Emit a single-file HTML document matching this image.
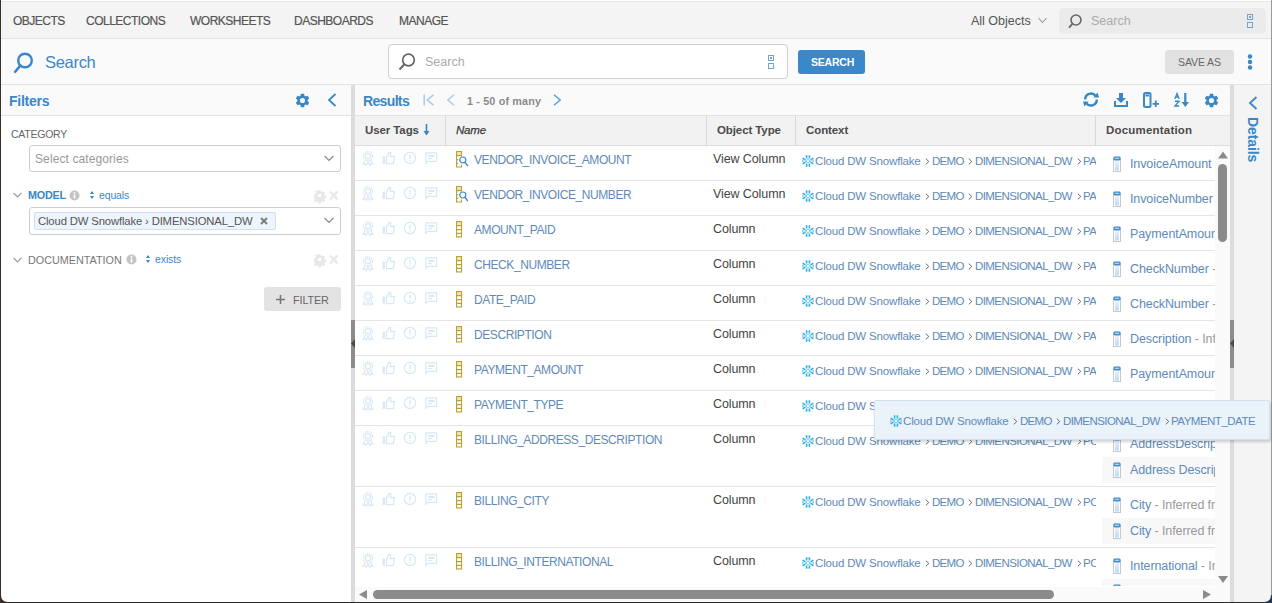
<!DOCTYPE html>
<html><head><meta charset="utf-8">
<style>
*{box-sizing:border-box}
html,body{margin:0;padding:0}
body{width:1272px;height:603px;overflow:hidden;position:relative;background:#fff;font-family:"Liberation Sans",sans-serif;color:#555}
.a{position:absolute;white-space:nowrap}
.t{position:absolute;white-space:nowrap;line-height:1}
svg{position:absolute;overflow:visible}
/* frame */
#topbar{left:0;top:0;width:1272px;height:39px;background:#f4f4f4;border-top:1px solid #fff;border-bottom:1px solid #e2e2e2}
#topline{left:0;top:1px;width:1272px;height:1px;background:#e4e4e4}
#bar2{left:0;top:39px;width:1272px;height:46px;background:#fafafa;border-bottom:1px solid #e2e2e2}
.nav{font-size:12px;letter-spacing:-0.5px;color:#555;top:14.5px;-webkit-text-stroke:0.2px #555}
#fhdr{left:0;top:85px;width:351px;height:31px;background:#fafafa;border-bottom:1px solid #e2e2e2}
#rhdr{left:355px;top:85px;width:875px;height:31px;background:#fafafa;border-bottom:1px solid #e2e2e2}
#split1{left:351px;top:85px;width:4px;height:518px;background:#dcdcdc}
#split2{left:1230px;top:85px;width:4px;height:518px;background:#dcdcdc}
.handle{position:absolute;width:4px;height:48px;top:320px;background:#8c8c8c}
#details{left:1234px;top:85px;width:38px;height:518px;background:#f4f4f4}
#thead{left:355px;top:116px;width:875px;height:30px;background:#f2f2f2;border-bottom:1px solid #dedede}
.th{font-weight:bold;font-size:11.5px;color:#4a4a4a;top:125px;letter-spacing:-0.1px}
.vline{position:absolute;width:1px;background:#d8d8d8}
.row{position:absolute;left:355px;width:863px;border-top:1px solid #e6e6e6}
.nm{font-size:12px;letter-spacing:-0.42px;color:#5e8ab7}
.ot{font-size:12.5px;color:#444;letter-spacing:-0.1px}
.ctx{font-size:11.5px;color:#5e8ab7;letter-spacing:-0.3px}
.doc{font-size:12.5px;color:#5e8ab7;letter-spacing:-0.1px}
.dim{color:#999}
</style></head>
<body>
<!-- top bar -->
<div class="a" id="topbar"></div>
<div class="a" id="topline"></div>
<div class="t nav" style="left:13px">OBJECTS</div>
<div class="t nav" style="left:86px">COLLECTIONS</div>
<div class="t nav" style="left:190px">WORKSHEETS</div>
<div class="t nav" style="left:294px">DASHBOARDS</div>
<div class="t nav" style="left:399px">MANAGE</div>

<div class="t" style="left:971px;top:15px;font-size:12.5px;color:#555;letter-spacing:0px">All Objects</div>
<svg style="left:1038px;top:17px" width="9" height="7" viewBox="0 0 9 7"><path d="M0.5 1 L4.5 5.5 L8.5 1" fill="none" stroke="#999" stroke-width="1.1"/></svg>
<div class="a" style="left:1059px;top:8px;width:207px;height:26px;background:#ebebeb;border-radius:5px"></div>
<svg style="left:1068px;top:14px" width="14" height="15" viewBox="0 0 14 15"><circle cx="8" cy="6" r="5" fill="none" stroke="#666" stroke-width="1.6"/><path d="M4.6 9.6 L1 13.6" stroke="#666" stroke-width="1.8"/></svg>
<div class="t" style="left:1091px;top:15px;font-size:12.5px;color:#aaa">Search</div>
<svg style="left:1247px;top:14px" width="7" height="14" viewBox="0 0 7 14"><rect x="0.5" y="0.5" width="5" height="5" fill="none" stroke="#6fa3d3"/><rect x="2" y="2" width="2" height="2" fill="#6fa3d3"/><rect x="0.5" y="8.5" width="5" height="5" fill="none" stroke="#6fa3d3"/></svg>

<!-- second bar -->
<div class="a" id="bar2"></div>
<svg style="left:14px;top:52px" width="20" height="22" viewBox="0 0 20 22"><circle cx="11" cy="8.5" r="6.8" fill="none" stroke="#3a87c8" stroke-width="2.4"/><path d="M6.2 13.6 L1.2 19.8" stroke="#3a87c8" stroke-width="2.6" stroke-linecap="round"/></svg>
<div class="t" style="left:45px;top:53.5px;font-size:16.5px;color:#3a87c8;letter-spacing:-0.3px">Search</div>

<div class="a" style="left:388px;top:44px;width:400px;height:35px;background:#fff;border:1px solid #cfcfcf;border-radius:4px"></div>
<svg style="left:398px;top:53px" width="18" height="18" viewBox="0 0 18 18"><circle cx="10.5" cy="7" r="5.8" fill="none" stroke="#666" stroke-width="1.7"/><path d="M6.5 11.2 L1.5 16.5" stroke="#666" stroke-width="2"/></svg>
<div class="t" style="left:425px;top:56px;font-size:12.5px;color:#aaa">Search</div>
<svg style="left:768px;top:55px" width="7" height="14" viewBox="0 0 7 14"><rect x="0.5" y="0.5" width="5" height="5" fill="none" stroke="#6fa3d3"/><rect x="2" y="2" width="2" height="2" fill="#6fa3d3"/><rect x="0.5" y="8.5" width="5" height="5" fill="none" stroke="#6fa3d3"/></svg>

<div class="a" style="left:798px;top:50px;width:67px;height:24px;background:#3a88c9;border-radius:3px"></div>
<div class="t" style="left:811px;top:57px;font-size:10.5px;font-weight:bold;color:#fff;letter-spacing:-0.2px">SEARCH</div>

<div class="a" style="left:1165px;top:50px;width:69px;height:24px;background:#e2e2e2;border-radius:3px"></div>
<div class="t" style="left:1178px;top:57px;font-size:10.5px;color:#666;letter-spacing:-0.1px">SAVE AS</div>
<svg style="left:1247px;top:54px" width="6" height="16" viewBox="0 0 6 16"><circle cx="3" cy="2.5" r="2.2" fill="#3a87c8"/><circle cx="3" cy="8" r="2.2" fill="#3a87c8"/><circle cx="3" cy="13.5" r="2.2" fill="#3a87c8"/></svg>

<!-- panels -->
<div class="a" id="fhdr"></div>
<div class="a" id="rhdr"></div>
<div class="a" id="split1"><div class="handle" style="top:235px"></div></div>
<div class="a" id="split2"><div class="handle" style="top:235px"></div></div>
<svg style="left:351px;top:339px" width="4" height="9" viewBox="0 0 4 9"><path d="M4 0 L4 9 L0 4.5Z" fill="#4a4a4a"/></svg>
<svg style="left:1230px;top:339px" width="4" height="9" viewBox="0 0 4 9"><path d="M4 0 L4 9 L0 4.5Z" fill="#4a4a4a"/></svg>
<div class="a" id="details"></div>
<div class="a" style="left:1271px;top:0;width:1px;height:603px;background:#9a9a9a"></div>
<div class="a" style="left:0;top:0;width:1px;height:603px;background:#3a2e28"></div>
<div class="a" style="left:0;top:602px;width:1272px;height:1px;background:#2d2a2a"></div>
<svg style="left:0;top:595px" width="8" height="8" viewBox="0 0 8 8"><path d="M0 0 L1 0 Q1 7 8 7 L8 8 L0 8Z" fill="#3a2e28"/></svg>
<svg style="left:1264px;top:595px" width="8" height="8" viewBox="0 0 8 8"><path d="M8 0 L7 0 Q7 7 0 7 L0 8 L8 8Z" fill="#1f3550"/></svg>


<!-- filters panel -->
<div class="t" style="left:9px;top:94px;font-size:14px;font-weight:bold;color:#3a87c8;letter-spacing:-0.25px">Filters</div>
<svg style="left:293.5px;top:91.5px" width="17" height="17" viewBox="0 0 24 24"><path fill="#3a87c8" d="M19.14 12.94c.04-.3.06-.61.06-.94 0-.32-.02-.64-.07-.94l2.03-1.58a.49.49 0 0 0 .12-.61l-1.92-3.32a.49.49 0 0 0-.59-.22l-2.39.96c-.5-.38-1.03-.7-1.62-.94l-.36-2.54a.48.48 0 0 0-.48-.41h-3.84c-.24 0-.43.17-.47.41l-.36 2.54c-.59.24-1.13.57-1.62.94l-2.39-.96a.48.48 0 0 0-.59.22L2.74 8.87c-.12.21-.08.47.12.61l2.03 1.58c-.05.3-.09.63-.09.94s.02.64.07.94l-2.03 1.58a.49.49 0 0 0-.12.61l1.92 3.32c.12.22.37.29.59.22l2.39-.96c.5.38 1.03.7 1.62.94l.36 2.54c.05.24.24.41.48.41h3.84c.24 0 .44-.17.47-.41l.36-2.54c.59-.24 1.13-.56 1.62-.94l2.39.96c.22.08.47 0 .59-.22l1.92-3.32c.12-.22.07-.47-.12-.61l-2.01-1.58zM12 15.6A3.6 3.6 0 1 1 12 8.4a3.6 3.6 0 0 1 0 7.2z"/></svg>
<svg style="left:327px;top:93px" width="10" height="14" viewBox="0 0 10 14"><path d="M8.5 1 L2 7 L8.5 13" fill="none" stroke="#3a87c8" stroke-width="1.8"/></svg>

<div class="t" style="left:11px;top:128.5px;font-size:10.5px;color:#666;letter-spacing:-0.25px">CATEGORY</div>
<div class="a" style="left:29px;top:145px;width:312px;height:27px;background:#fff;border:1px solid #cdcdcd;border-radius:3px"></div>
<div class="t" style="left:35px;top:153px;font-size:12px;color:#999;letter-spacing:0.1px">Select categories</div>
<svg style="left:324px;top:155px" width="10" height="7" viewBox="0 0 10 7"><path d="M0.6 1 L5 5.5 L9.4 1" fill="none" stroke="#888" stroke-width="1.2"/></svg>

<svg style="left:13px;top:192px" width="9" height="6" viewBox="0 0 9 6"><path d="M0.5 0.8 L4.5 4.8 L8.5 0.8" fill="none" stroke="#999" stroke-width="1.2"/></svg>
<div class="t" style="left:28px;top:190px;font-size:10.8px;font-weight:bold;color:#3a87c8;letter-spacing:-0.2px">MODEL</div>
<svg style="left:69px;top:190px" width="11" height="11" viewBox="0 0 11 11"><circle cx="5.5" cy="5.5" r="5" fill="#c4c4c4"/><rect x="4.7" y="4.5" width="1.6" height="4" fill="#fff"/><circle cx="5.5" cy="2.9" r="0.9" fill="#fff"/></svg>
<svg style="left:90px;top:191px" width="4" height="8" viewBox="0 0 4 8"><path d="M0 3 L2 0 L4 3Z M0 5 L2 8 L4 5Z" fill="#3a87c8"/></svg>
<div class="t" style="left:99px;top:189.5px;font-size:10.5px;color:#3a87c8;letter-spacing:-0.15px">equals</div>
<svg style="left:314px;top:190px" width="25" height="11" viewBox="0 0 25 11"><g fill="#e8e8e8"><circle cx="5.5" cy="5.5" r="4.2"/><path d="M4.5 0h2l.4 1.5 1.4.6 1.3-.8 1.4 1.4-.8 1.3.6 1.4 1.5.4v2l-1.5.4-.6 1.4.8 1.3-1.4 1.4-1.3-.8-1.4.6-.4 1.5h-2l-.4-1.5-1.4-.6-1.3.8-1.4-1.4.8-1.3-.6-1.4L0 6.5v-2l1.5-.4.6-1.4-.8-1.3 1.4-1.4 1.3.8 1.4-.6z"/></g><circle cx="5.5" cy="5.5" r="1.7" fill="#fff"/><path d="M16 1.5 L23.5 9.5 M23.5 1.5 L16 9.5" stroke="#e8e8e8" stroke-width="2"/></svg>

<div class="a" style="left:29px;top:207px;width:312px;height:28px;background:#fff;border:1px solid #cdcdcd;border-radius:3px"></div>
<div class="a" style="left:34px;top:212px;width:242px;height:18px;background:#edf4fb;border:1px solid #cfe0f0;border-radius:2px"></div>
<div class="t" style="left:38px;top:216px;font-size:11.3px;color:#555;letter-spacing:-0.15px">Cloud DW Snowflake › DIMENSIONAL_DW</div>
<svg style="left:260px;top:217px" width="8" height="8" viewBox="0 0 8 8"><path d="M1 1 L7 7 M7 1 L1 7" stroke="#777" stroke-width="1.8"/></svg>
<svg style="left:324px;top:217px" width="10" height="7" viewBox="0 0 10 7"><path d="M0.6 1 L5 5.5 L9.4 1" fill="none" stroke="#888" stroke-width="1.2"/></svg>

<svg style="left:13px;top:257px" width="9" height="6" viewBox="0 0 9 6"><path d="M0.5 0.8 L4.5 4.8 L8.5 0.8" fill="none" stroke="#999" stroke-width="1.2"/></svg>
<div class="t" style="left:28px;top:255px;font-size:10.8px;color:#777;letter-spacing:0px">DOCUMENTATION</div>
<svg style="left:126px;top:254px" width="11" height="11" viewBox="0 0 11 11"><circle cx="5.5" cy="5.5" r="5" fill="#c4c4c4"/><rect x="4.7" y="4.5" width="1.6" height="4" fill="#fff"/><circle cx="5.5" cy="2.9" r="0.9" fill="#fff"/></svg>
<svg style="left:146px;top:255px" width="4" height="8" viewBox="0 0 4 8"><path d="M0 3 L2 0 L4 3Z M0 5 L2 8 L4 5Z" fill="#3a87c8"/></svg>
<div class="t" style="left:155px;top:254px;font-size:10.5px;color:#3a87c8;letter-spacing:-0.1px">exists</div>
<svg style="left:314px;top:254px" width="25" height="11" viewBox="0 0 25 11"><g fill="#e8e8e8"><path d="M4.5 0h2l.4 1.5 1.4.6 1.3-.8 1.4 1.4-.8 1.3.6 1.4 1.5.4v2l-1.5.4-.6 1.4.8 1.3-1.4 1.4-1.3-.8-1.4.6-.4 1.5h-2l-.4-1.5-1.4-.6-1.3.8-1.4-1.4.8-1.3-.6-1.4L0 6.5v-2l1.5-.4.6-1.4-.8-1.3 1.4-1.4 1.3.8 1.4-.6z"/></g><circle cx="5.5" cy="5.5" r="1.7" fill="#fff"/><path d="M16 1.5 L23.5 9.5 M23.5 1.5 L16 9.5" stroke="#e8e8e8" stroke-width="2"/></svg>

<div class="a" style="left:264px;top:287px;width:77px;height:24px;background:#e3e3e3;border-radius:3px"></div>
<svg style="left:276px;top:295px" width="9" height="9" viewBox="0 0 9 9"><path d="M4.5 0 V9 M0 4.5 H9" stroke="#777" stroke-width="1.6"/></svg>
<div class="t" style="left:293px;top:294.5px;font-size:10.8px;color:#666;letter-spacing:-0.1px">FILTER</div>


<!-- results header -->
<div class="t" style="left:363px;top:93.5px;font-size:14px;font-weight:bold;color:#3a87c8;letter-spacing:-0.65px">Results</div>
<svg style="left:423px;top:94px" width="12" height="12" viewBox="0 0 12 12"><path d="M1.2 0.5 V11.5 M10.5 0.8 L4.2 6 L10.5 11.2" fill="none" stroke="#a8cbe8" stroke-width="1.5"/></svg>
<svg style="left:446px;top:94px" width="9" height="12" viewBox="0 0 9 12"><path d="M8 0.8 L1.8 6 L8 11.2" fill="none" stroke="#a8cbe8" stroke-width="1.5"/></svg>
<div class="t" style="left:467px;top:96px;font-size:10.8px;font-weight:bold;color:#8a8a8a;letter-spacing:0.15px">1 - 50 of many</div>
<svg style="left:553px;top:94px" width="9" height="12" viewBox="0 0 9 12"><path d="M1 0.8 L7.2 6 L1 11.2" fill="none" stroke="#5b9fd6" stroke-width="1.5"/></svg>

<svg style="left:1082px;top:92px" width="18" height="15" viewBox="0 0 18 15"><path d="M3.2 7.5 A5.8 5.8 0 0 1 13.6 3.8" fill="none" stroke="#3a87c8" stroke-width="2.4"/><path d="M14.8 7.5 A5.8 5.8 0 0 1 4.4 11.2" fill="none" stroke="#3a87c8" stroke-width="2.4"/><path d="M11.4 5.4 L17 5.6 L15.6 0.6Z" fill="#3a87c8"/><path d="M6.6 9.6 L1 9.4 L2.4 14.4Z" fill="#3a87c8"/></svg>
<svg style="left:1114px;top:93px" width="14" height="14" viewBox="0 0 14 14"><path d="M5 0 H9 V5 H12 L7 10 L2 5 H5Z" fill="#3a87c8"/><path d="M1 8 V13 H13 V8" fill="none" stroke="#3a87c8" stroke-width="2"/></svg>
<svg style="left:1143px;top:92px" width="17" height="16" viewBox="0 0 17 16"><rect x="1" y="1" width="6.5" height="14" rx="1.5" fill="none" stroke="#3a87c8" stroke-width="2"/><rect x="2.5" y="2.5" width="3.5" height="2" fill="#3a87c8"/><path d="M12.8 8.5 V15 M9.6 11.8 H16" stroke="#3a87c8" stroke-width="1.8"/></svg>
<svg style="left:1174px;top:93px" width="16" height="14" viewBox="0 0 16 14"><path d="M0.8 6 L3 0.5 L5.2 6 M1.6 4 H4.4" fill="none" stroke="#3a87c8" stroke-width="1.3"/><path d="M1 8.3 H5 L1 13 H5.2" fill="none" stroke="#3a87c8" stroke-width="1.4"/><path d="M10.2 0 H12.4 V9 H15 L11.3 14 L7.6 9 H10.2Z" fill="#3a87c8"/></svg>
<svg style="left:1202.5px;top:91.5px" width="17" height="17" viewBox="0 0 24 24"><path fill="#3a87c8" d="M19.14 12.94c.04-.3.06-.61.06-.94 0-.32-.02-.64-.07-.94l2.03-1.58a.49.49 0 0 0 .12-.61l-1.92-3.32a.49.49 0 0 0-.59-.22l-2.39.96c-.5-.38-1.030-.7-1.62-.94l-.36-2.54a.48.48 0 0 0-.48-.41h-3.84c-.24 0-.43.17-.47.41l-.36 2.54c-.59.24-1.13.57-1.62.94l-2.39-.96a.48.48 0 0 0-.59.22L2.74 8.87c-.12.21-.08.47.12.61l2.03 1.58c-.05.3-.09.63-.09.94s.02.64.07.94l-2.03 1.58a.49.49 0 0 0-.12.61l1.920 3.32c.12.22.37.29.59.22l2.39-.96c.5.38 1.03.7 1.62.94l.36 2.54c.05.24.24.41.48.41h3.84c.24 0 .44-.17.47-.41l.36-2.54c.59-.24 1.13-.56 1.62-.94l2.39.96c.22.08.47 0 .59-.22l1.92-3.32c.12-.22.07-.47-.12-.61l-2.01-1.58zM12 15.6A3.6 3.6 0 1 1 12 8.4a3.6 3.6 0 0 1 0 7.2z"/></svg>

<svg style="left:1248px;top:96px" width="10" height="14" viewBox="0 0 10 14"><path d="M8.5 1 L2 7 L8.5 13" fill="none" stroke="#3a87c8" stroke-width="1.8"/></svg>
<div class="t" style="left:1259.5px;top:117px;font-size:14px;font-weight:bold;color:#3a87c8;transform-origin:0 0;transform:rotate(90deg);letter-spacing:-0.1px">Details</div>

<!-- rows -->
<div class="a" style="left:355px;top:145px;width:860px;height:441px;overflow:hidden"><div class="a" style="left:-355px;top:-145px;width:1272px;height:603px">
<div class="a" style="left:355px;top:145px;width:863px;height:1px;background:#e5e5e5"></div>
<svg style="left:361px;top:151px" width="78" height="15" viewBox="0 0 78 15">
<g fill="none" stroke="#d9e8f5" stroke-width="1.2"><circle cx="7" cy="5.3" r="4.6" stroke-dasharray="1.6 0.6"/><circle cx="7" cy="5.3" r="2.6"/><path d="M4.3 9.2 L2.2 13 L4.4 12.8 L5.3 14.2 L7 10.6 M9.7 9.2 L11.8 13 L9.6 12.8 L8.7 14.2 L7 10.6"/></g>
<g fill="#d9e8f5"><rect x="21.6" y="5.5" width="2.3" height="7.3"/></g><path d="M25.4 12.6 V6.3 L28.4 1.2 L29.8 1.8 L29.3 5.5 H33.6 L32.3 12.6Z" fill="none" stroke="#d9e8f5" stroke-width="1.3" stroke-linejoin="round"/>
<circle cx="49" cy="7" r="5.6" fill="none" stroke="#d9e8f5" stroke-width="1.2"/><rect x="48.3" y="3.5" width="1.4" height="4.4" fill="#d9e8f5"/><rect x="48.3" y="9.2" width="1.4" height="1.4" fill="#d9e8f5"/>
<path d="M64.8 1.8 H75.6 V10.3 H66.8 L64.8 12.5 Z" fill="none" stroke="#d9e8f5" stroke-width="1.2" stroke-linejoin="round"/><rect x="67.3" y="3.8" width="6" height="2.2" fill="#d9e8f5"/><rect x="66.8" y="7" width="4.2" height="1.2" fill="#d9e8f5"/>
</svg>
<svg style="left:456px;top:150.5px" width="14" height="17" viewBox="0 0 14 17"><rect x="1" y="1" width="4" height="3.2" fill="#f2e4b0"/><path d="M5.5 5.5 V0.55 H0.55 V15.95 H5.5 V13.5 M0.5 4.6 H5.5 M0.5 8.6 H2.2 M0.5 12.4 H2.2" fill="none" stroke="#bc9f36" stroke-width="1.1"/><circle cx="6.8" cy="9" r="3" fill="none" stroke="#3a87c8" stroke-width="1.2"/><path d="M8.9 11.2 L11.8 15" stroke="#3a87c8" stroke-width="1.3"/></svg>
<div class="t nm" style="left:474px;top:153.5px">VENDOR_INVOICE_AMOUNT</div>
<div class="t ot" style="left:713px;top:152.5px">View Column</div>
<svg style="left:801.5px;top:155px" width="12" height="12" viewBox="0 0 12 12"><g stroke="#2fb0e6" stroke-width="1.6" fill="none" stroke-linecap="butt"><path d="M4.6 0.3 V3.6 M7.4 0.3 V3.6 M4.6 11.7 V8.4 M7.4 11.7 V8.4"/><path d="M0.6 3.2 L3.4 4.9 M0.6 8.8 L3.4 7.1 M11.4 3.2 L8.6 4.9 M11.4 8.8 L8.6 7.1"/></g><g fill="#2fb0e6"><path d="M3 6 L4.6 4.6 L4.6 7.4Z M9 6 L7.4 4.6 L7.4 7.4Z M6 3.7 L7 5 L5 5Z M6 8.3 L7 7 L5 7Z"/><path d="M0 5.2 L2.4 6 L0 6.8Z M12 5.2 L9.6 6 L12 6.8Z"/></g></svg>
<div class="t ctx" style="left:815px;top:155.5px;letter-spacing:-0.17px">Cloud DW Snowflake</div>
<svg style="left:925.0px;top:157.5px" width="5" height="7" viewBox="0 0 5 7"><path d="M0.8 0.6 L3.8 3.5 L0.8 6.4" fill="none" stroke="#666" stroke-width="1"/></svg>
<div class="t ctx" style="left:932px;top:155.5px;letter-spacing:-0.7px">DEMO</div>
<svg style="left:968.0px;top:157.5px" width="5" height="7" viewBox="0 0 5 7"><path d="M0.8 0.6 L3.8 3.5 L0.8 6.4" fill="none" stroke="#666" stroke-width="1"/></svg>
<div class="t ctx" style="left:975px;top:155.5px;letter-spacing:-0.57px">DIMENSIONAL_DW</div>
<svg style="left:1076.5px;top:157.5px" width="5" height="7" viewBox="0 0 5 7"><path d="M0.8 0.6 L3.8 3.5 L0.8 6.4" fill="none" stroke="#666" stroke-width="1"/></svg>
<div class="t ctx" style="left:1083px;top:155.5px;width:13px;overflow:hidden;letter-spacing:-0.5px">PAYMENT_DATE</div>
<svg style="left:1113px;top:156px" width="8" height="16" viewBox="0 0 8 16"><defs><linearGradient id="dg" x1="0" y1="0" x2="0" y2="1"><stop offset="0" stop-color="#e8f2fb"/><stop offset="1" stop-color="#b9daf3"/></linearGradient></defs><rect x="0.5" y="3" width="7" height="12.5" fill="#fff" stroke="#c8c8c8" stroke-width="1"/><rect x="2" y="5" width="4" height="9.5" fill="url(#dg)"/><rect x="0.4" y="0.4" width="7.2" height="4" rx="1.4" fill="#3a87c8"/><rect x="1.7" y="1.6" width="4.6" height="1.5" fill="#a9cdee"/></svg>
<div class="t doc" style="left:1130px;top:158px;width:85px;overflow:hidden">InvoiceAmount<span class="dim"></span></div>
<div class="a" style="left:355px;top:180px;width:863px;height:1px;background:#e5e5e5"></div>
<svg style="left:361px;top:186px" width="78" height="15" viewBox="0 0 78 15">
<g fill="none" stroke="#d9e8f5" stroke-width="1.2"><circle cx="7" cy="5.3" r="4.6" stroke-dasharray="1.6 0.6"/><circle cx="7" cy="5.3" r="2.6"/><path d="M4.3 9.2 L2.2 13 L4.4 12.8 L5.3 14.2 L7 10.6 M9.7 9.2 L11.8 13 L9.6 12.8 L8.7 14.2 L7 10.6"/></g>
<g fill="#d9e8f5"><rect x="21.6" y="5.5" width="2.3" height="7.3"/></g><path d="M25.4 12.6 V6.3 L28.4 1.2 L29.8 1.8 L29.3 5.5 H33.6 L32.3 12.6Z" fill="none" stroke="#d9e8f5" stroke-width="1.3" stroke-linejoin="round"/>
<circle cx="49" cy="7" r="5.6" fill="none" stroke="#d9e8f5" stroke-width="1.2"/><rect x="48.3" y="3.5" width="1.4" height="4.4" fill="#d9e8f5"/><rect x="48.3" y="9.2" width="1.4" height="1.4" fill="#d9e8f5"/>
<path d="M64.8 1.8 H75.6 V10.3 H66.8 L64.8 12.5 Z" fill="none" stroke="#d9e8f5" stroke-width="1.2" stroke-linejoin="round"/><rect x="67.3" y="3.8" width="6" height="2.2" fill="#d9e8f5"/><rect x="66.8" y="7" width="4.2" height="1.2" fill="#d9e8f5"/>
</svg>
<svg style="left:456px;top:185.5px" width="14" height="17" viewBox="0 0 14 17"><rect x="1" y="1" width="4" height="3.2" fill="#f2e4b0"/><path d="M5.5 5.5 V0.55 H0.55 V15.95 H5.5 V13.5 M0.5 4.6 H5.5 M0.5 8.6 H2.2 M0.5 12.4 H2.2" fill="none" stroke="#bc9f36" stroke-width="1.1"/><circle cx="6.8" cy="9" r="3" fill="none" stroke="#3a87c8" stroke-width="1.2"/><path d="M8.9 11.2 L11.8 15" stroke="#3a87c8" stroke-width="1.3"/></svg>
<div class="t nm" style="left:474px;top:188.5px">VENDOR_INVOICE_NUMBER</div>
<div class="t ot" style="left:713px;top:187.5px">View Column</div>
<svg style="left:801.5px;top:190px" width="12" height="12" viewBox="0 0 12 12"><g stroke="#2fb0e6" stroke-width="1.6" fill="none" stroke-linecap="butt"><path d="M4.6 0.3 V3.6 M7.4 0.3 V3.6 M4.6 11.7 V8.4 M7.4 11.7 V8.4"/><path d="M0.6 3.2 L3.4 4.9 M0.6 8.8 L3.4 7.1 M11.4 3.2 L8.6 4.9 M11.4 8.8 L8.6 7.1"/></g><g fill="#2fb0e6"><path d="M3 6 L4.6 4.6 L4.6 7.4Z M9 6 L7.4 4.6 L7.4 7.4Z M6 3.7 L7 5 L5 5Z M6 8.3 L7 7 L5 7Z"/><path d="M0 5.2 L2.4 6 L0 6.8Z M12 5.2 L9.6 6 L12 6.8Z"/></g></svg>
<div class="t ctx" style="left:815px;top:190.5px;letter-spacing:-0.17px">Cloud DW Snowflake</div>
<svg style="left:925.0px;top:192.5px" width="5" height="7" viewBox="0 0 5 7"><path d="M0.8 0.6 L3.8 3.5 L0.8 6.4" fill="none" stroke="#666" stroke-width="1"/></svg>
<div class="t ctx" style="left:932px;top:190.5px;letter-spacing:-0.7px">DEMO</div>
<svg style="left:968.0px;top:192.5px" width="5" height="7" viewBox="0 0 5 7"><path d="M0.8 0.6 L3.8 3.5 L0.8 6.4" fill="none" stroke="#666" stroke-width="1"/></svg>
<div class="t ctx" style="left:975px;top:190.5px;letter-spacing:-0.57px">DIMENSIONAL_DW</div>
<svg style="left:1076.5px;top:192.5px" width="5" height="7" viewBox="0 0 5 7"><path d="M0.8 0.6 L3.8 3.5 L0.8 6.4" fill="none" stroke="#666" stroke-width="1"/></svg>
<div class="t ctx" style="left:1083px;top:190.5px;width:13px;overflow:hidden;letter-spacing:-0.5px">PAYMENT_DATE</div>
<svg style="left:1113px;top:191px" width="8" height="16" viewBox="0 0 8 16"><defs><linearGradient id="dg" x1="0" y1="0" x2="0" y2="1"><stop offset="0" stop-color="#e8f2fb"/><stop offset="1" stop-color="#b9daf3"/></linearGradient></defs><rect x="0.5" y="3" width="7" height="12.5" fill="#fff" stroke="#c8c8c8" stroke-width="1"/><rect x="2" y="5" width="4" height="9.5" fill="url(#dg)"/><rect x="0.4" y="0.4" width="7.2" height="4" rx="1.4" fill="#3a87c8"/><rect x="1.7" y="1.6" width="4.6" height="1.5" fill="#a9cdee"/></svg>
<div class="t doc" style="left:1130px;top:193px;width:85px;overflow:hidden">InvoiceNumber<span class="dim"></span></div>
<div class="a" style="left:355px;top:215px;width:863px;height:1px;background:#e5e5e5"></div>
<svg style="left:361px;top:221px" width="78" height="15" viewBox="0 0 78 15">
<g fill="none" stroke="#d9e8f5" stroke-width="1.2"><circle cx="7" cy="5.3" r="4.6" stroke-dasharray="1.6 0.6"/><circle cx="7" cy="5.3" r="2.6"/><path d="M4.3 9.2 L2.2 13 L4.4 12.8 L5.3 14.2 L7 10.6 M9.7 9.2 L11.8 13 L9.6 12.8 L8.7 14.2 L7 10.6"/></g>
<g fill="#d9e8f5"><rect x="21.6" y="5.5" width="2.3" height="7.3"/></g><path d="M25.4 12.6 V6.3 L28.4 1.2 L29.8 1.8 L29.3 5.5 H33.6 L32.3 12.6Z" fill="none" stroke="#d9e8f5" stroke-width="1.3" stroke-linejoin="round"/>
<circle cx="49" cy="7" r="5.6" fill="none" stroke="#d9e8f5" stroke-width="1.2"/><rect x="48.3" y="3.5" width="1.4" height="4.4" fill="#d9e8f5"/><rect x="48.3" y="9.2" width="1.4" height="1.4" fill="#d9e8f5"/>
<path d="M64.8 1.8 H75.6 V10.3 H66.8 L64.8 12.5 Z" fill="none" stroke="#d9e8f5" stroke-width="1.2" stroke-linejoin="round"/><rect x="67.3" y="3.8" width="6" height="2.2" fill="#d9e8f5"/><rect x="66.8" y="7" width="4.2" height="1.2" fill="#d9e8f5"/>
</svg>
<svg style="left:456px;top:220.5px" width="7" height="17" viewBox="0 0 7 17"><rect x="1" y="1" width="4" height="3.2" fill="#f2e4b0"/><rect x="0.55" y="0.55" width="5" height="15.4" fill="none" stroke="#bc9f36" stroke-width="1.1"/><path d="M0.5 4.6 H5.5 M0.5 8.6 H5.5 M0.5 12.4 H5.5" stroke="#bc9f36" stroke-width="1.1"/></svg>
<div class="t nm" style="left:474px;top:223.5px">AMOUNT_PAID</div>
<div class="t ot" style="left:713px;top:222.5px">Column</div>
<svg style="left:801.5px;top:225px" width="12" height="12" viewBox="0 0 12 12"><g stroke="#2fb0e6" stroke-width="1.6" fill="none" stroke-linecap="butt"><path d="M4.6 0.3 V3.6 M7.4 0.3 V3.6 M4.6 11.7 V8.4 M7.4 11.7 V8.4"/><path d="M0.6 3.2 L3.4 4.9 M0.6 8.8 L3.4 7.1 M11.4 3.2 L8.6 4.9 M11.4 8.8 L8.6 7.1"/></g><g fill="#2fb0e6"><path d="M3 6 L4.6 4.6 L4.6 7.4Z M9 6 L7.4 4.6 L7.4 7.4Z M6 3.7 L7 5 L5 5Z M6 8.3 L7 7 L5 7Z"/><path d="M0 5.2 L2.4 6 L0 6.8Z M12 5.2 L9.6 6 L12 6.8Z"/></g></svg>
<div class="t ctx" style="left:815px;top:225.5px;letter-spacing:-0.17px">Cloud DW Snowflake</div>
<svg style="left:925.0px;top:227.5px" width="5" height="7" viewBox="0 0 5 7"><path d="M0.8 0.6 L3.8 3.5 L0.8 6.4" fill="none" stroke="#666" stroke-width="1"/></svg>
<div class="t ctx" style="left:932px;top:225.5px;letter-spacing:-0.7px">DEMO</div>
<svg style="left:968.0px;top:227.5px" width="5" height="7" viewBox="0 0 5 7"><path d="M0.8 0.6 L3.8 3.5 L0.8 6.4" fill="none" stroke="#666" stroke-width="1"/></svg>
<div class="t ctx" style="left:975px;top:225.5px;letter-spacing:-0.57px">DIMENSIONAL_DW</div>
<svg style="left:1076.5px;top:227.5px" width="5" height="7" viewBox="0 0 5 7"><path d="M0.8 0.6 L3.8 3.5 L0.8 6.4" fill="none" stroke="#666" stroke-width="1"/></svg>
<div class="t ctx" style="left:1083px;top:225.5px;width:13px;overflow:hidden;letter-spacing:-0.5px">PAYMENT_DATE</div>
<svg style="left:1113px;top:226px" width="8" height="16" viewBox="0 0 8 16"><defs><linearGradient id="dg" x1="0" y1="0" x2="0" y2="1"><stop offset="0" stop-color="#e8f2fb"/><stop offset="1" stop-color="#b9daf3"/></linearGradient></defs><rect x="0.5" y="3" width="7" height="12.5" fill="#fff" stroke="#c8c8c8" stroke-width="1"/><rect x="2" y="5" width="4" height="9.5" fill="url(#dg)"/><rect x="0.4" y="0.4" width="7.2" height="4" rx="1.4" fill="#3a87c8"/><rect x="1.7" y="1.6" width="4.6" height="1.5" fill="#a9cdee"/></svg>
<div class="t doc" style="left:1130px;top:228px;width:85px;overflow:hidden">PaymentAmount<span class="dim"></span></div>
<div class="a" style="left:355px;top:250px;width:863px;height:1px;background:#e5e5e5"></div>
<svg style="left:361px;top:256px" width="78" height="15" viewBox="0 0 78 15">
<g fill="none" stroke="#d9e8f5" stroke-width="1.2"><circle cx="7" cy="5.3" r="4.6" stroke-dasharray="1.6 0.6"/><circle cx="7" cy="5.3" r="2.6"/><path d="M4.3 9.2 L2.2 13 L4.4 12.8 L5.3 14.2 L7 10.6 M9.7 9.2 L11.8 13 L9.6 12.8 L8.7 14.2 L7 10.6"/></g>
<g fill="#d9e8f5"><rect x="21.6" y="5.5" width="2.3" height="7.3"/></g><path d="M25.4 12.6 V6.3 L28.4 1.2 L29.8 1.8 L29.3 5.5 H33.6 L32.3 12.6Z" fill="none" stroke="#d9e8f5" stroke-width="1.3" stroke-linejoin="round"/>
<circle cx="49" cy="7" r="5.6" fill="none" stroke="#d9e8f5" stroke-width="1.2"/><rect x="48.3" y="3.5" width="1.4" height="4.4" fill="#d9e8f5"/><rect x="48.3" y="9.2" width="1.4" height="1.4" fill="#d9e8f5"/>
<path d="M64.8 1.8 H75.6 V10.3 H66.8 L64.8 12.5 Z" fill="none" stroke="#d9e8f5" stroke-width="1.2" stroke-linejoin="round"/><rect x="67.3" y="3.8" width="6" height="2.2" fill="#d9e8f5"/><rect x="66.8" y="7" width="4.2" height="1.2" fill="#d9e8f5"/>
</svg>
<svg style="left:456px;top:255.5px" width="7" height="17" viewBox="0 0 7 17"><rect x="1" y="1" width="4" height="3.2" fill="#f2e4b0"/><rect x="0.55" y="0.55" width="5" height="15.4" fill="none" stroke="#bc9f36" stroke-width="1.1"/><path d="M0.5 4.6 H5.5 M0.5 8.6 H5.5 M0.5 12.4 H5.5" stroke="#bc9f36" stroke-width="1.1"/></svg>
<div class="t nm" style="left:474px;top:258.5px">CHECK_NUMBER</div>
<div class="t ot" style="left:713px;top:257.5px">Column</div>
<svg style="left:801.5px;top:260px" width="12" height="12" viewBox="0 0 12 12"><g stroke="#2fb0e6" stroke-width="1.6" fill="none" stroke-linecap="butt"><path d="M4.6 0.3 V3.6 M7.4 0.3 V3.6 M4.6 11.7 V8.4 M7.4 11.7 V8.4"/><path d="M0.6 3.2 L3.4 4.9 M0.6 8.8 L3.4 7.1 M11.4 3.2 L8.6 4.9 M11.4 8.8 L8.6 7.1"/></g><g fill="#2fb0e6"><path d="M3 6 L4.6 4.6 L4.6 7.4Z M9 6 L7.4 4.6 L7.4 7.4Z M6 3.7 L7 5 L5 5Z M6 8.3 L7 7 L5 7Z"/><path d="M0 5.2 L2.4 6 L0 6.8Z M12 5.2 L9.6 6 L12 6.8Z"/></g></svg>
<div class="t ctx" style="left:815px;top:260.5px;letter-spacing:-0.17px">Cloud DW Snowflake</div>
<svg style="left:925.0px;top:262.5px" width="5" height="7" viewBox="0 0 5 7"><path d="M0.8 0.6 L3.8 3.5 L0.8 6.4" fill="none" stroke="#666" stroke-width="1"/></svg>
<div class="t ctx" style="left:932px;top:260.5px;letter-spacing:-0.7px">DEMO</div>
<svg style="left:968.0px;top:262.5px" width="5" height="7" viewBox="0 0 5 7"><path d="M0.8 0.6 L3.8 3.5 L0.8 6.4" fill="none" stroke="#666" stroke-width="1"/></svg>
<div class="t ctx" style="left:975px;top:260.5px;letter-spacing:-0.57px">DIMENSIONAL_DW</div>
<svg style="left:1076.5px;top:262.5px" width="5" height="7" viewBox="0 0 5 7"><path d="M0.8 0.6 L3.8 3.5 L0.8 6.4" fill="none" stroke="#666" stroke-width="1"/></svg>
<div class="t ctx" style="left:1083px;top:260.5px;width:13px;overflow:hidden;letter-spacing:-0.5px">PAYMENT_DATE</div>
<svg style="left:1113px;top:261px" width="8" height="16" viewBox="0 0 8 16"><defs><linearGradient id="dg" x1="0" y1="0" x2="0" y2="1"><stop offset="0" stop-color="#e8f2fb"/><stop offset="1" stop-color="#b9daf3"/></linearGradient></defs><rect x="0.5" y="3" width="7" height="12.5" fill="#fff" stroke="#c8c8c8" stroke-width="1"/><rect x="2" y="5" width="4" height="9.5" fill="url(#dg)"/><rect x="0.4" y="0.4" width="7.2" height="4" rx="1.4" fill="#3a87c8"/><rect x="1.7" y="1.6" width="4.6" height="1.5" fill="#a9cdee"/></svg>
<div class="t doc" style="left:1130px;top:263px;width:85px;overflow:hidden">CheckNumber<span class="dim"> - Inferred</span></div>
<div class="a" style="left:355px;top:285px;width:863px;height:1px;background:#e5e5e5"></div>
<svg style="left:361px;top:291px" width="78" height="15" viewBox="0 0 78 15">
<g fill="none" stroke="#d9e8f5" stroke-width="1.2"><circle cx="7" cy="5.3" r="4.6" stroke-dasharray="1.6 0.6"/><circle cx="7" cy="5.3" r="2.6"/><path d="M4.3 9.2 L2.2 13 L4.4 12.8 L5.3 14.2 L7 10.6 M9.7 9.2 L11.8 13 L9.6 12.8 L8.7 14.2 L7 10.6"/></g>
<g fill="#d9e8f5"><rect x="21.6" y="5.5" width="2.3" height="7.3"/></g><path d="M25.4 12.6 V6.3 L28.4 1.2 L29.8 1.8 L29.3 5.5 H33.6 L32.3 12.6Z" fill="none" stroke="#d9e8f5" stroke-width="1.3" stroke-linejoin="round"/>
<circle cx="49" cy="7" r="5.6" fill="none" stroke="#d9e8f5" stroke-width="1.2"/><rect x="48.3" y="3.5" width="1.4" height="4.4" fill="#d9e8f5"/><rect x="48.3" y="9.2" width="1.4" height="1.4" fill="#d9e8f5"/>
<path d="M64.8 1.8 H75.6 V10.3 H66.8 L64.8 12.5 Z" fill="none" stroke="#d9e8f5" stroke-width="1.2" stroke-linejoin="round"/><rect x="67.3" y="3.8" width="6" height="2.2" fill="#d9e8f5"/><rect x="66.8" y="7" width="4.2" height="1.2" fill="#d9e8f5"/>
</svg>
<svg style="left:456px;top:290.5px" width="7" height="17" viewBox="0 0 7 17"><rect x="1" y="1" width="4" height="3.2" fill="#f2e4b0"/><rect x="0.55" y="0.55" width="5" height="15.4" fill="none" stroke="#bc9f36" stroke-width="1.1"/><path d="M0.5 4.6 H5.5 M0.5 8.6 H5.5 M0.5 12.4 H5.5" stroke="#bc9f36" stroke-width="1.1"/></svg>
<div class="t nm" style="left:474px;top:293.5px">DATE_PAID</div>
<div class="t ot" style="left:713px;top:292.5px">Column</div>
<svg style="left:801.5px;top:295px" width="12" height="12" viewBox="0 0 12 12"><g stroke="#2fb0e6" stroke-width="1.6" fill="none" stroke-linecap="butt"><path d="M4.6 0.3 V3.6 M7.4 0.3 V3.6 M4.6 11.7 V8.4 M7.4 11.7 V8.4"/><path d="M0.6 3.2 L3.4 4.9 M0.6 8.8 L3.4 7.1 M11.4 3.2 L8.6 4.9 M11.4 8.8 L8.6 7.1"/></g><g fill="#2fb0e6"><path d="M3 6 L4.6 4.6 L4.6 7.4Z M9 6 L7.4 4.6 L7.4 7.4Z M6 3.7 L7 5 L5 5Z M6 8.3 L7 7 L5 7Z"/><path d="M0 5.2 L2.4 6 L0 6.8Z M12 5.2 L9.6 6 L12 6.8Z"/></g></svg>
<div class="t ctx" style="left:815px;top:295.5px;letter-spacing:-0.17px">Cloud DW Snowflake</div>
<svg style="left:925.0px;top:297.5px" width="5" height="7" viewBox="0 0 5 7"><path d="M0.8 0.6 L3.8 3.5 L0.8 6.4" fill="none" stroke="#666" stroke-width="1"/></svg>
<div class="t ctx" style="left:932px;top:295.5px;letter-spacing:-0.7px">DEMO</div>
<svg style="left:968.0px;top:297.5px" width="5" height="7" viewBox="0 0 5 7"><path d="M0.8 0.6 L3.8 3.5 L0.8 6.4" fill="none" stroke="#666" stroke-width="1"/></svg>
<div class="t ctx" style="left:975px;top:295.5px;letter-spacing:-0.57px">DIMENSIONAL_DW</div>
<svg style="left:1076.5px;top:297.5px" width="5" height="7" viewBox="0 0 5 7"><path d="M0.8 0.6 L3.8 3.5 L0.8 6.4" fill="none" stroke="#666" stroke-width="1"/></svg>
<div class="t ctx" style="left:1083px;top:295.5px;width:13px;overflow:hidden;letter-spacing:-0.5px">PAYMENT_DATE</div>
<svg style="left:1113px;top:296px" width="8" height="16" viewBox="0 0 8 16"><defs><linearGradient id="dg" x1="0" y1="0" x2="0" y2="1"><stop offset="0" stop-color="#e8f2fb"/><stop offset="1" stop-color="#b9daf3"/></linearGradient></defs><rect x="0.5" y="3" width="7" height="12.5" fill="#fff" stroke="#c8c8c8" stroke-width="1"/><rect x="2" y="5" width="4" height="9.5" fill="url(#dg)"/><rect x="0.4" y="0.4" width="7.2" height="4" rx="1.4" fill="#3a87c8"/><rect x="1.7" y="1.6" width="4.6" height="1.5" fill="#a9cdee"/></svg>
<div class="t doc" style="left:1130px;top:298px;width:85px;overflow:hidden">CheckNumber<span class="dim"> - Inferred</span></div>
<div class="a" style="left:355px;top:320px;width:863px;height:1px;background:#e5e5e5"></div>
<svg style="left:361px;top:326px" width="78" height="15" viewBox="0 0 78 15">
<g fill="none" stroke="#d9e8f5" stroke-width="1.2"><circle cx="7" cy="5.3" r="4.6" stroke-dasharray="1.6 0.6"/><circle cx="7" cy="5.3" r="2.6"/><path d="M4.3 9.2 L2.2 13 L4.4 12.8 L5.3 14.2 L7 10.6 M9.7 9.2 L11.8 13 L9.6 12.8 L8.7 14.2 L7 10.6"/></g>
<g fill="#d9e8f5"><rect x="21.6" y="5.5" width="2.3" height="7.3"/></g><path d="M25.4 12.6 V6.3 L28.4 1.2 L29.8 1.8 L29.3 5.5 H33.6 L32.3 12.6Z" fill="none" stroke="#d9e8f5" stroke-width="1.3" stroke-linejoin="round"/>
<circle cx="49" cy="7" r="5.6" fill="none" stroke="#d9e8f5" stroke-width="1.2"/><rect x="48.3" y="3.5" width="1.4" height="4.4" fill="#d9e8f5"/><rect x="48.3" y="9.2" width="1.4" height="1.4" fill="#d9e8f5"/>
<path d="M64.8 1.8 H75.6 V10.3 H66.8 L64.8 12.5 Z" fill="none" stroke="#d9e8f5" stroke-width="1.2" stroke-linejoin="round"/><rect x="67.3" y="3.8" width="6" height="2.2" fill="#d9e8f5"/><rect x="66.8" y="7" width="4.2" height="1.2" fill="#d9e8f5"/>
</svg>
<svg style="left:456px;top:325.5px" width="7" height="17" viewBox="0 0 7 17"><rect x="1" y="1" width="4" height="3.2" fill="#f2e4b0"/><rect x="0.55" y="0.55" width="5" height="15.4" fill="none" stroke="#bc9f36" stroke-width="1.1"/><path d="M0.5 4.6 H5.5 M0.5 8.6 H5.5 M0.5 12.4 H5.5" stroke="#bc9f36" stroke-width="1.1"/></svg>
<div class="t nm" style="left:474px;top:328.5px">DESCRIPTION</div>
<div class="t ot" style="left:713px;top:327.5px">Column</div>
<svg style="left:801.5px;top:330px" width="12" height="12" viewBox="0 0 12 12"><g stroke="#2fb0e6" stroke-width="1.6" fill="none" stroke-linecap="butt"><path d="M4.6 0.3 V3.6 M7.4 0.3 V3.6 M4.6 11.7 V8.4 M7.4 11.7 V8.4"/><path d="M0.6 3.2 L3.4 4.9 M0.6 8.8 L3.4 7.1 M11.4 3.2 L8.6 4.9 M11.4 8.8 L8.6 7.1"/></g><g fill="#2fb0e6"><path d="M3 6 L4.6 4.6 L4.6 7.4Z M9 6 L7.4 4.6 L7.4 7.4Z M6 3.7 L7 5 L5 5Z M6 8.3 L7 7 L5 7Z"/><path d="M0 5.2 L2.4 6 L0 6.8Z M12 5.2 L9.6 6 L12 6.8Z"/></g></svg>
<div class="t ctx" style="left:815px;top:330.5px;letter-spacing:-0.17px">Cloud DW Snowflake</div>
<svg style="left:925.0px;top:332.5px" width="5" height="7" viewBox="0 0 5 7"><path d="M0.8 0.6 L3.8 3.5 L0.8 6.4" fill="none" stroke="#666" stroke-width="1"/></svg>
<div class="t ctx" style="left:932px;top:330.5px;letter-spacing:-0.7px">DEMO</div>
<svg style="left:968.0px;top:332.5px" width="5" height="7" viewBox="0 0 5 7"><path d="M0.8 0.6 L3.8 3.5 L0.8 6.4" fill="none" stroke="#666" stroke-width="1"/></svg>
<div class="t ctx" style="left:975px;top:330.5px;letter-spacing:-0.57px">DIMENSIONAL_DW</div>
<svg style="left:1076.5px;top:332.5px" width="5" height="7" viewBox="0 0 5 7"><path d="M0.8 0.6 L3.8 3.5 L0.8 6.4" fill="none" stroke="#666" stroke-width="1"/></svg>
<div class="t ctx" style="left:1083px;top:330.5px;width:13px;overflow:hidden;letter-spacing:-0.5px">PAYMENT_DATE</div>
<svg style="left:1113px;top:331px" width="8" height="16" viewBox="0 0 8 16"><defs><linearGradient id="dg" x1="0" y1="0" x2="0" y2="1"><stop offset="0" stop-color="#e8f2fb"/><stop offset="1" stop-color="#b9daf3"/></linearGradient></defs><rect x="0.5" y="3" width="7" height="12.5" fill="#fff" stroke="#c8c8c8" stroke-width="1"/><rect x="2" y="5" width="4" height="9.5" fill="url(#dg)"/><rect x="0.4" y="0.4" width="7.2" height="4" rx="1.4" fill="#3a87c8"/><rect x="1.7" y="1.6" width="4.6" height="1.5" fill="#a9cdee"/></svg>
<div class="t doc" style="left:1130px;top:333px;width:85px;overflow:hidden">Description<span class="dim"> - Inferred</span></div>
<div class="a" style="left:355px;top:355px;width:863px;height:1px;background:#e5e5e5"></div>
<svg style="left:361px;top:361px" width="78" height="15" viewBox="0 0 78 15">
<g fill="none" stroke="#d9e8f5" stroke-width="1.2"><circle cx="7" cy="5.3" r="4.6" stroke-dasharray="1.6 0.6"/><circle cx="7" cy="5.3" r="2.6"/><path d="M4.3 9.2 L2.2 13 L4.4 12.8 L5.3 14.2 L7 10.6 M9.7 9.2 L11.8 13 L9.6 12.8 L8.7 14.2 L7 10.6"/></g>
<g fill="#d9e8f5"><rect x="21.6" y="5.5" width="2.3" height="7.3"/></g><path d="M25.4 12.6 V6.3 L28.4 1.2 L29.8 1.8 L29.3 5.5 H33.6 L32.3 12.6Z" fill="none" stroke="#d9e8f5" stroke-width="1.3" stroke-linejoin="round"/>
<circle cx="49" cy="7" r="5.6" fill="none" stroke="#d9e8f5" stroke-width="1.2"/><rect x="48.3" y="3.5" width="1.4" height="4.4" fill="#d9e8f5"/><rect x="48.3" y="9.2" width="1.4" height="1.4" fill="#d9e8f5"/>
<path d="M64.8 1.8 H75.6 V10.3 H66.8 L64.8 12.5 Z" fill="none" stroke="#d9e8f5" stroke-width="1.2" stroke-linejoin="round"/><rect x="67.3" y="3.8" width="6" height="2.2" fill="#d9e8f5"/><rect x="66.8" y="7" width="4.2" height="1.2" fill="#d9e8f5"/>
</svg>
<svg style="left:456px;top:360.5px" width="7" height="17" viewBox="0 0 7 17"><rect x="1" y="1" width="4" height="3.2" fill="#f2e4b0"/><rect x="0.55" y="0.55" width="5" height="15.4" fill="none" stroke="#bc9f36" stroke-width="1.1"/><path d="M0.5 4.6 H5.5 M0.5 8.6 H5.5 M0.5 12.4 H5.5" stroke="#bc9f36" stroke-width="1.1"/></svg>
<div class="t nm" style="left:474px;top:363.5px">PAYMENT_AMOUNT</div>
<div class="t ot" style="left:713px;top:362.5px">Column</div>
<svg style="left:801.5px;top:365px" width="12" height="12" viewBox="0 0 12 12"><g stroke="#2fb0e6" stroke-width="1.6" fill="none" stroke-linecap="butt"><path d="M4.6 0.3 V3.6 M7.4 0.3 V3.6 M4.6 11.7 V8.4 M7.4 11.7 V8.4"/><path d="M0.6 3.2 L3.4 4.9 M0.6 8.8 L3.4 7.1 M11.4 3.2 L8.6 4.9 M11.4 8.8 L8.6 7.1"/></g><g fill="#2fb0e6"><path d="M3 6 L4.6 4.6 L4.6 7.4Z M9 6 L7.4 4.6 L7.4 7.4Z M6 3.7 L7 5 L5 5Z M6 8.3 L7 7 L5 7Z"/><path d="M0 5.2 L2.4 6 L0 6.8Z M12 5.2 L9.6 6 L12 6.8Z"/></g></svg>
<div class="t ctx" style="left:815px;top:365.5px;letter-spacing:-0.17px">Cloud DW Snowflake</div>
<svg style="left:925.0px;top:367.5px" width="5" height="7" viewBox="0 0 5 7"><path d="M0.8 0.6 L3.8 3.5 L0.8 6.4" fill="none" stroke="#666" stroke-width="1"/></svg>
<div class="t ctx" style="left:932px;top:365.5px;letter-spacing:-0.7px">DEMO</div>
<svg style="left:968.0px;top:367.5px" width="5" height="7" viewBox="0 0 5 7"><path d="M0.8 0.6 L3.8 3.5 L0.8 6.4" fill="none" stroke="#666" stroke-width="1"/></svg>
<div class="t ctx" style="left:975px;top:365.5px;letter-spacing:-0.57px">DIMENSIONAL_DW</div>
<svg style="left:1076.5px;top:367.5px" width="5" height="7" viewBox="0 0 5 7"><path d="M0.8 0.6 L3.8 3.5 L0.8 6.4" fill="none" stroke="#666" stroke-width="1"/></svg>
<div class="t ctx" style="left:1083px;top:365.5px;width:13px;overflow:hidden;letter-spacing:-0.5px">PAYMENT_DATE</div>
<svg style="left:1113px;top:366px" width="8" height="16" viewBox="0 0 8 16"><defs><linearGradient id="dg" x1="0" y1="0" x2="0" y2="1"><stop offset="0" stop-color="#e8f2fb"/><stop offset="1" stop-color="#b9daf3"/></linearGradient></defs><rect x="0.5" y="3" width="7" height="12.5" fill="#fff" stroke="#c8c8c8" stroke-width="1"/><rect x="2" y="5" width="4" height="9.5" fill="url(#dg)"/><rect x="0.4" y="0.4" width="7.2" height="4" rx="1.4" fill="#3a87c8"/><rect x="1.7" y="1.6" width="4.6" height="1.5" fill="#a9cdee"/></svg>
<div class="t doc" style="left:1130px;top:368px;width:85px;overflow:hidden">PaymentAmount<span class="dim"></span></div>
<div class="a" style="left:355px;top:390px;width:863px;height:1px;background:#e5e5e5"></div>
<svg style="left:361px;top:396px" width="78" height="15" viewBox="0 0 78 15">
<g fill="none" stroke="#d9e8f5" stroke-width="1.2"><circle cx="7" cy="5.3" r="4.6" stroke-dasharray="1.6 0.6"/><circle cx="7" cy="5.3" r="2.6"/><path d="M4.3 9.2 L2.2 13 L4.4 12.8 L5.3 14.2 L7 10.6 M9.7 9.2 L11.8 13 L9.6 12.8 L8.7 14.2 L7 10.6"/></g>
<g fill="#d9e8f5"><rect x="21.6" y="5.5" width="2.3" height="7.3"/></g><path d="M25.4 12.6 V6.3 L28.4 1.2 L29.8 1.8 L29.3 5.5 H33.6 L32.3 12.6Z" fill="none" stroke="#d9e8f5" stroke-width="1.3" stroke-linejoin="round"/>
<circle cx="49" cy="7" r="5.6" fill="none" stroke="#d9e8f5" stroke-width="1.2"/><rect x="48.3" y="3.5" width="1.4" height="4.4" fill="#d9e8f5"/><rect x="48.3" y="9.2" width="1.4" height="1.4" fill="#d9e8f5"/>
<path d="M64.8 1.8 H75.6 V10.3 H66.8 L64.8 12.5 Z" fill="none" stroke="#d9e8f5" stroke-width="1.2" stroke-linejoin="round"/><rect x="67.3" y="3.8" width="6" height="2.2" fill="#d9e8f5"/><rect x="66.8" y="7" width="4.2" height="1.2" fill="#d9e8f5"/>
</svg>
<svg style="left:456px;top:395.5px" width="7" height="17" viewBox="0 0 7 17"><rect x="1" y="1" width="4" height="3.2" fill="#f2e4b0"/><rect x="0.55" y="0.55" width="5" height="15.4" fill="none" stroke="#bc9f36" stroke-width="1.1"/><path d="M0.5 4.6 H5.5 M0.5 8.6 H5.5 M0.5 12.4 H5.5" stroke="#bc9f36" stroke-width="1.1"/></svg>
<div class="t nm" style="left:474px;top:398.5px">PAYMENT_TYPE</div>
<div class="t ot" style="left:713px;top:397.5px">Column</div>
<svg style="left:801.5px;top:400px" width="12" height="12" viewBox="0 0 12 12"><g stroke="#2fb0e6" stroke-width="1.6" fill="none" stroke-linecap="butt"><path d="M4.6 0.3 V3.6 M7.4 0.3 V3.6 M4.6 11.7 V8.4 M7.4 11.7 V8.4"/><path d="M0.6 3.2 L3.4 4.9 M0.6 8.8 L3.4 7.1 M11.4 3.2 L8.6 4.9 M11.4 8.8 L8.6 7.1"/></g><g fill="#2fb0e6"><path d="M3 6 L4.6 4.6 L4.6 7.4Z M9 6 L7.4 4.6 L7.4 7.4Z M6 3.7 L7 5 L5 5Z M6 8.3 L7 7 L5 7Z"/><path d="M0 5.2 L2.4 6 L0 6.8Z M12 5.2 L9.6 6 L12 6.8Z"/></g></svg>
<div class="t ctx" style="left:815px;top:400.5px;letter-spacing:-0.17px">Cloud DW Snowflake</div>
<svg style="left:925.0px;top:402.5px" width="5" height="7" viewBox="0 0 5 7"><path d="M0.8 0.6 L3.8 3.5 L0.8 6.4" fill="none" stroke="#666" stroke-width="1"/></svg>
<div class="t ctx" style="left:932px;top:400.5px;letter-spacing:-0.7px">DEMO</div>
<svg style="left:968.0px;top:402.5px" width="5" height="7" viewBox="0 0 5 7"><path d="M0.8 0.6 L3.8 3.5 L0.8 6.4" fill="none" stroke="#666" stroke-width="1"/></svg>
<div class="t ctx" style="left:975px;top:400.5px;letter-spacing:-0.57px">DIMENSIONAL_DW</div>
<svg style="left:1076.5px;top:402.5px" width="5" height="7" viewBox="0 0 5 7"><path d="M0.8 0.6 L3.8 3.5 L0.8 6.4" fill="none" stroke="#666" stroke-width="1"/></svg>
<div class="t ctx" style="left:1083px;top:400.5px;width:13px;overflow:hidden;letter-spacing:-0.5px">PAYMENT_DATE</div>
<svg style="left:1113px;top:401px" width="8" height="16" viewBox="0 0 8 16"><defs><linearGradient id="dg" x1="0" y1="0" x2="0" y2="1"><stop offset="0" stop-color="#e8f2fb"/><stop offset="1" stop-color="#b9daf3"/></linearGradient></defs><rect x="0.5" y="3" width="7" height="12.5" fill="#fff" stroke="#c8c8c8" stroke-width="1"/><rect x="2" y="5" width="4" height="9.5" fill="url(#dg)"/><rect x="0.4" y="0.4" width="7.2" height="4" rx="1.4" fill="#3a87c8"/><rect x="1.7" y="1.6" width="4.6" height="1.5" fill="#a9cdee"/></svg>
<div class="t doc" style="left:1130px;top:403px;width:85px;overflow:hidden">PaymentType<span class="dim"></span></div>
<div class="a" style="left:355px;top:425px;width:863px;height:1px;background:#e5e5e5"></div>
<svg style="left:361px;top:431px" width="78" height="15" viewBox="0 0 78 15">
<g fill="none" stroke="#d9e8f5" stroke-width="1.2"><circle cx="7" cy="5.3" r="4.6" stroke-dasharray="1.6 0.6"/><circle cx="7" cy="5.3" r="2.6"/><path d="M4.3 9.2 L2.2 13 L4.4 12.8 L5.3 14.2 L7 10.6 M9.7 9.2 L11.8 13 L9.6 12.8 L8.7 14.2 L7 10.6"/></g>
<g fill="#d9e8f5"><rect x="21.6" y="5.5" width="2.3" height="7.3"/></g><path d="M25.4 12.6 V6.3 L28.4 1.2 L29.8 1.8 L29.3 5.5 H33.6 L32.3 12.6Z" fill="none" stroke="#d9e8f5" stroke-width="1.3" stroke-linejoin="round"/>
<circle cx="49" cy="7" r="5.6" fill="none" stroke="#d9e8f5" stroke-width="1.2"/><rect x="48.3" y="3.5" width="1.4" height="4.4" fill="#d9e8f5"/><rect x="48.3" y="9.2" width="1.4" height="1.4" fill="#d9e8f5"/>
<path d="M64.8 1.8 H75.6 V10.3 H66.8 L64.8 12.5 Z" fill="none" stroke="#d9e8f5" stroke-width="1.2" stroke-linejoin="round"/><rect x="67.3" y="3.8" width="6" height="2.2" fill="#d9e8f5"/><rect x="66.8" y="7" width="4.2" height="1.2" fill="#d9e8f5"/>
</svg>
<svg style="left:456px;top:430.5px" width="7" height="17" viewBox="0 0 7 17"><rect x="1" y="1" width="4" height="3.2" fill="#f2e4b0"/><rect x="0.55" y="0.55" width="5" height="15.4" fill="none" stroke="#bc9f36" stroke-width="1.1"/><path d="M0.5 4.6 H5.5 M0.5 8.6 H5.5 M0.5 12.4 H5.5" stroke="#bc9f36" stroke-width="1.1"/></svg>
<div class="t nm" style="left:474px;top:433.5px">BILLING_ADDRESS_DESCRIPTION</div>
<div class="t ot" style="left:713px;top:432.5px">Column</div>
<svg style="left:801.5px;top:435px" width="12" height="12" viewBox="0 0 12 12"><g stroke="#2fb0e6" stroke-width="1.6" fill="none" stroke-linecap="butt"><path d="M4.6 0.3 V3.6 M7.4 0.3 V3.6 M4.6 11.7 V8.4 M7.4 11.7 V8.4"/><path d="M0.6 3.2 L3.4 4.9 M0.6 8.8 L3.4 7.1 M11.4 3.2 L8.6 4.9 M11.4 8.8 L8.6 7.1"/></g><g fill="#2fb0e6"><path d="M3 6 L4.6 4.6 L4.6 7.4Z M9 6 L7.4 4.6 L7.4 7.4Z M6 3.7 L7 5 L5 5Z M6 8.3 L7 7 L5 7Z"/><path d="M0 5.2 L2.4 6 L0 6.8Z M12 5.2 L9.6 6 L12 6.8Z"/></g></svg>
<div class="t ctx" style="left:815px;top:435.5px;letter-spacing:-0.17px">Cloud DW Snowflake</div>
<svg style="left:925.0px;top:437.5px" width="5" height="7" viewBox="0 0 5 7"><path d="M0.8 0.6 L3.8 3.5 L0.8 6.4" fill="none" stroke="#666" stroke-width="1"/></svg>
<div class="t ctx" style="left:932px;top:435.5px;letter-spacing:-0.7px">DEMO</div>
<svg style="left:968.0px;top:437.5px" width="5" height="7" viewBox="0 0 5 7"><path d="M0.8 0.6 L3.8 3.5 L0.8 6.4" fill="none" stroke="#666" stroke-width="1"/></svg>
<div class="t ctx" style="left:975px;top:435.5px;letter-spacing:-0.57px">DIMENSIONAL_DW</div>
<svg style="left:1076.5px;top:437.5px" width="5" height="7" viewBox="0 0 5 7"><path d="M0.8 0.6 L3.8 3.5 L0.8 6.4" fill="none" stroke="#666" stroke-width="1"/></svg>
<div class="t ctx" style="left:1083px;top:435.5px;width:13px;overflow:hidden;letter-spacing:-0.5px">PCYMENT_DATE</div>
<svg style="left:1113px;top:436px" width="8" height="16" viewBox="0 0 8 16"><defs><linearGradient id="dg" x1="0" y1="0" x2="0" y2="1"><stop offset="0" stop-color="#e8f2fb"/><stop offset="1" stop-color="#b9daf3"/></linearGradient></defs><rect x="0.5" y="3" width="7" height="12.5" fill="#fff" stroke="#c8c8c8" stroke-width="1"/><rect x="2" y="5" width="4" height="9.5" fill="url(#dg)"/><rect x="0.4" y="0.4" width="7.2" height="4" rx="1.4" fill="#3a87c8"/><rect x="1.7" y="1.6" width="4.6" height="1.5" fill="#a9cdee"/></svg>
<div class="t doc" style="left:1130px;top:438px;width:85px;overflow:hidden">AddressDescription<span class="dim"></span></div>
<div class="a" style="left:1102px;top:456.5px;width:113px;height:26px;background:#f8f8f8"></div>
<svg style="left:1113px;top:462px" width="8" height="16" viewBox="0 0 8 16"><defs><linearGradient id="dg" x1="0" y1="0" x2="0" y2="1"><stop offset="0" stop-color="#e8f2fb"/><stop offset="1" stop-color="#b9daf3"/></linearGradient></defs><rect x="0.5" y="3" width="7" height="12.5" fill="#fff" stroke="#c8c8c8" stroke-width="1"/><rect x="2" y="5" width="4" height="9.5" fill="url(#dg)"/><rect x="0.4" y="0.4" width="7.2" height="4" rx="1.4" fill="#3a87c8"/><rect x="1.7" y="1.6" width="4.6" height="1.5" fill="#a9cdee"/></svg>
<div class="t doc" style="left:1130px;top:464px;width:85px;overflow:hidden">Address Description<span class="dim"></span></div>
<div class="a" style="left:355px;top:486px;width:863px;height:1px;background:#e5e5e5"></div>
<svg style="left:361px;top:492px" width="78" height="15" viewBox="0 0 78 15">
<g fill="none" stroke="#d9e8f5" stroke-width="1.2"><circle cx="7" cy="5.3" r="4.6" stroke-dasharray="1.6 0.6"/><circle cx="7" cy="5.3" r="2.6"/><path d="M4.3 9.2 L2.2 13 L4.4 12.8 L5.3 14.2 L7 10.6 M9.7 9.2 L11.8 13 L9.6 12.8 L8.7 14.2 L7 10.6"/></g>
<g fill="#d9e8f5"><rect x="21.6" y="5.5" width="2.3" height="7.3"/></g><path d="M25.4 12.6 V6.3 L28.4 1.2 L29.8 1.8 L29.3 5.5 H33.6 L32.3 12.6Z" fill="none" stroke="#d9e8f5" stroke-width="1.3" stroke-linejoin="round"/>
<circle cx="49" cy="7" r="5.6" fill="none" stroke="#d9e8f5" stroke-width="1.2"/><rect x="48.3" y="3.5" width="1.4" height="4.4" fill="#d9e8f5"/><rect x="48.3" y="9.2" width="1.4" height="1.4" fill="#d9e8f5"/>
<path d="M64.8 1.8 H75.6 V10.3 H66.8 L64.8 12.5 Z" fill="none" stroke="#d9e8f5" stroke-width="1.2" stroke-linejoin="round"/><rect x="67.3" y="3.8" width="6" height="2.2" fill="#d9e8f5"/><rect x="66.8" y="7" width="4.2" height="1.2" fill="#d9e8f5"/>
</svg>
<svg style="left:456px;top:491.5px" width="7" height="17" viewBox="0 0 7 17"><rect x="1" y="1" width="4" height="3.2" fill="#f2e4b0"/><rect x="0.55" y="0.55" width="5" height="15.4" fill="none" stroke="#bc9f36" stroke-width="1.1"/><path d="M0.5 4.6 H5.5 M0.5 8.6 H5.5 M0.5 12.4 H5.5" stroke="#bc9f36" stroke-width="1.1"/></svg>
<div class="t nm" style="left:474px;top:494.5px">BILLING_CITY</div>
<div class="t ot" style="left:713px;top:493.5px">Column</div>
<svg style="left:801.5px;top:496px" width="12" height="12" viewBox="0 0 12 12"><g stroke="#2fb0e6" stroke-width="1.6" fill="none" stroke-linecap="butt"><path d="M4.6 0.3 V3.6 M7.4 0.3 V3.6 M4.6 11.7 V8.4 M7.4 11.7 V8.4"/><path d="M0.6 3.2 L3.4 4.9 M0.6 8.8 L3.4 7.1 M11.4 3.2 L8.6 4.9 M11.4 8.8 L8.6 7.1"/></g><g fill="#2fb0e6"><path d="M3 6 L4.6 4.6 L4.6 7.4Z M9 6 L7.4 4.6 L7.4 7.4Z M6 3.7 L7 5 L5 5Z M6 8.3 L7 7 L5 7Z"/><path d="M0 5.2 L2.4 6 L0 6.8Z M12 5.2 L9.6 6 L12 6.8Z"/></g></svg>
<div class="t ctx" style="left:815px;top:496.5px;letter-spacing:-0.17px">Cloud DW Snowflake</div>
<svg style="left:925.0px;top:498.5px" width="5" height="7" viewBox="0 0 5 7"><path d="M0.8 0.6 L3.8 3.5 L0.8 6.4" fill="none" stroke="#666" stroke-width="1"/></svg>
<div class="t ctx" style="left:932px;top:496.5px;letter-spacing:-0.7px">DEMO</div>
<svg style="left:968.0px;top:498.5px" width="5" height="7" viewBox="0 0 5 7"><path d="M0.8 0.6 L3.8 3.5 L0.8 6.4" fill="none" stroke="#666" stroke-width="1"/></svg>
<div class="t ctx" style="left:975px;top:496.5px;letter-spacing:-0.57px">DIMENSIONAL_DW</div>
<svg style="left:1076.5px;top:498.5px" width="5" height="7" viewBox="0 0 5 7"><path d="M0.8 0.6 L3.8 3.5 L0.8 6.4" fill="none" stroke="#666" stroke-width="1"/></svg>
<div class="t ctx" style="left:1083px;top:496.5px;width:13px;overflow:hidden;letter-spacing:-0.5px">PCYMENT_DATE</div>
<svg style="left:1113px;top:497px" width="8" height="16" viewBox="0 0 8 16"><defs><linearGradient id="dg" x1="0" y1="0" x2="0" y2="1"><stop offset="0" stop-color="#e8f2fb"/><stop offset="1" stop-color="#b9daf3"/></linearGradient></defs><rect x="0.5" y="3" width="7" height="12.5" fill="#fff" stroke="#c8c8c8" stroke-width="1"/><rect x="2" y="5" width="4" height="9.5" fill="url(#dg)"/><rect x="0.4" y="0.4" width="7.2" height="4" rx="1.4" fill="#3a87c8"/><rect x="1.7" y="1.6" width="4.6" height="1.5" fill="#a9cdee"/></svg>
<div class="t doc" style="left:1130px;top:499px;width:85px;overflow:hidden">City<span class="dim"> - Inferred from</span></div>
<div class="a" style="left:1102px;top:517.5px;width:113px;height:26px;background:#f8f8f8"></div>
<svg style="left:1113px;top:523px" width="8" height="16" viewBox="0 0 8 16"><defs><linearGradient id="dg" x1="0" y1="0" x2="0" y2="1"><stop offset="0" stop-color="#e8f2fb"/><stop offset="1" stop-color="#b9daf3"/></linearGradient></defs><rect x="0.5" y="3" width="7" height="12.5" fill="#fff" stroke="#c8c8c8" stroke-width="1"/><rect x="2" y="5" width="4" height="9.5" fill="url(#dg)"/><rect x="0.4" y="0.4" width="7.2" height="4" rx="1.4" fill="#3a87c8"/><rect x="1.7" y="1.6" width="4.6" height="1.5" fill="#a9cdee"/></svg>
<div class="t doc" style="left:1130px;top:525px;width:85px;overflow:hidden">City<span class="dim"> - Inferred from</span></div>
<div class="a" style="left:355px;top:547px;width:863px;height:1px;background:#e5e5e5"></div>
<svg style="left:361px;top:553px" width="78" height="15" viewBox="0 0 78 15">
<g fill="none" stroke="#d9e8f5" stroke-width="1.2"><circle cx="7" cy="5.3" r="4.6" stroke-dasharray="1.6 0.6"/><circle cx="7" cy="5.3" r="2.6"/><path d="M4.3 9.2 L2.2 13 L4.4 12.8 L5.3 14.2 L7 10.6 M9.7 9.2 L11.8 13 L9.6 12.8 L8.7 14.2 L7 10.6"/></g>
<g fill="#d9e8f5"><rect x="21.6" y="5.5" width="2.3" height="7.3"/></g><path d="M25.4 12.6 V6.3 L28.4 1.2 L29.8 1.8 L29.3 5.5 H33.6 L32.3 12.6Z" fill="none" stroke="#d9e8f5" stroke-width="1.3" stroke-linejoin="round"/>
<circle cx="49" cy="7" r="5.6" fill="none" stroke="#d9e8f5" stroke-width="1.2"/><rect x="48.3" y="3.5" width="1.4" height="4.4" fill="#d9e8f5"/><rect x="48.3" y="9.2" width="1.4" height="1.4" fill="#d9e8f5"/>
<path d="M64.8 1.8 H75.6 V10.3 H66.8 L64.8 12.5 Z" fill="none" stroke="#d9e8f5" stroke-width="1.2" stroke-linejoin="round"/><rect x="67.3" y="3.8" width="6" height="2.2" fill="#d9e8f5"/><rect x="66.8" y="7" width="4.2" height="1.2" fill="#d9e8f5"/>
</svg>
<svg style="left:456px;top:552.5px" width="7" height="17" viewBox="0 0 7 17"><rect x="1" y="1" width="4" height="3.2" fill="#f2e4b0"/><rect x="0.55" y="0.55" width="5" height="15.4" fill="none" stroke="#bc9f36" stroke-width="1.1"/><path d="M0.5 4.6 H5.5 M0.5 8.6 H5.5 M0.5 12.4 H5.5" stroke="#bc9f36" stroke-width="1.1"/></svg>
<div class="t nm" style="left:474px;top:555.5px">BILLING_INTERNATIONAL</div>
<div class="t ot" style="left:713px;top:554.5px">Column</div>
<svg style="left:801.5px;top:557px" width="12" height="12" viewBox="0 0 12 12"><g stroke="#2fb0e6" stroke-width="1.6" fill="none" stroke-linecap="butt"><path d="M4.6 0.3 V3.6 M7.4 0.3 V3.6 M4.6 11.7 V8.4 M7.4 11.7 V8.4"/><path d="M0.6 3.2 L3.4 4.9 M0.6 8.8 L3.4 7.1 M11.4 3.2 L8.6 4.9 M11.4 8.8 L8.6 7.1"/></g><g fill="#2fb0e6"><path d="M3 6 L4.6 4.6 L4.6 7.4Z M9 6 L7.4 4.6 L7.4 7.4Z M6 3.7 L7 5 L5 5Z M6 8.3 L7 7 L5 7Z"/><path d="M0 5.2 L2.4 6 L0 6.8Z M12 5.2 L9.6 6 L12 6.8Z"/></g></svg>
<div class="t ctx" style="left:815px;top:557.5px;letter-spacing:-0.17px">Cloud DW Snowflake</div>
<svg style="left:925.0px;top:559.5px" width="5" height="7" viewBox="0 0 5 7"><path d="M0.8 0.6 L3.8 3.5 L0.8 6.4" fill="none" stroke="#666" stroke-width="1"/></svg>
<div class="t ctx" style="left:932px;top:557.5px;letter-spacing:-0.7px">DEMO</div>
<svg style="left:968.0px;top:559.5px" width="5" height="7" viewBox="0 0 5 7"><path d="M0.8 0.6 L3.8 3.5 L0.8 6.4" fill="none" stroke="#666" stroke-width="1"/></svg>
<div class="t ctx" style="left:975px;top:557.5px;letter-spacing:-0.57px">DIMENSIONAL_DW</div>
<svg style="left:1076.5px;top:559.5px" width="5" height="7" viewBox="0 0 5 7"><path d="M0.8 0.6 L3.8 3.5 L0.8 6.4" fill="none" stroke="#666" stroke-width="1"/></svg>
<div class="t ctx" style="left:1083px;top:557.5px;width:13px;overflow:hidden;letter-spacing:-0.5px">PCYMENT_DATE</div>
<svg style="left:1113px;top:558px" width="8" height="16" viewBox="0 0 8 16"><defs><linearGradient id="dg" x1="0" y1="0" x2="0" y2="1"><stop offset="0" stop-color="#e8f2fb"/><stop offset="1" stop-color="#b9daf3"/></linearGradient></defs><rect x="0.5" y="3" width="7" height="12.5" fill="#fff" stroke="#c8c8c8" stroke-width="1"/><rect x="2" y="5" width="4" height="9.5" fill="url(#dg)"/><rect x="0.4" y="0.4" width="7.2" height="4" rx="1.4" fill="#3a87c8"/><rect x="1.7" y="1.6" width="4.6" height="1.5" fill="#a9cdee"/></svg>
<div class="t doc" style="left:1130px;top:560px;width:85px;overflow:hidden">International<span class="dim"> - Inferred</span></div>
<div class="a" style="left:1102px;top:578.5px;width:113px;height:26px;background:#f8f8f8"></div>
<svg style="left:1113px;top:584px" width="8" height="16" viewBox="0 0 8 16"><defs><linearGradient id="dg" x1="0" y1="0" x2="0" y2="1"><stop offset="0" stop-color="#e8f2fb"/><stop offset="1" stop-color="#b9daf3"/></linearGradient></defs><rect x="0.5" y="3" width="7" height="12.5" fill="#fff" stroke="#c8c8c8" stroke-width="1"/><rect x="2" y="5" width="4" height="9.5" fill="url(#dg)"/><rect x="0.4" y="0.4" width="7.2" height="4" rx="1.4" fill="#3a87c8"/><rect x="1.7" y="1.6" width="4.6" height="1.5" fill="#a9cdee"/></svg>
<div class="t doc" style="left:1130px;top:586px;width:85px;overflow:hidden">International<span class="dim"></span></div>
</div></div>
<!-- scrollbars -->
<div class="a" style="left:1215px;top:145px;width:15px;height:442px;background:#fafafa"></div>
<svg style="left:1218px;top:151px" width="10" height="8" viewBox="0 0 10 8"><path d="M0 7.5 L5 0.5 L10 7.5Z" fill="#8b8b8b"/></svg>
<div class="a" style="left:1218px;top:163.5px;width:9px;height:78px;background:#8b8b8b;border-radius:4.5px"></div>
<svg style="left:1218px;top:576px" width="10" height="7" viewBox="0 0 10 7"><path d="M0 0 L10 0 L5 7Z" fill="#8b8b8b"/></svg>
<div class="a" style="left:355px;top:587px;width:875px;height:15px;background:#fafafa"></div>
<svg style="left:359px;top:590px" width="8" height="9" viewBox="0 0 8 9"><path d="M8 0 L8 9 L0 4.5Z" fill="#8b8b8b"/></svg>
<div class="a" style="left:373px;top:590px;width:681px;height:9px;background:#8b8b8b;border-radius:4.5px"></div>
<svg style="left:1203px;top:590px" width="8" height="9" viewBox="0 0 8 9"><path d="M0 0 L0 9 L8 4.5Z" fill="#8b8b8b"/></svg>
<!-- tooltip -->
<div class="a" style="left:874px;top:400px;width:396px;height:40px;background:#eaf2fa;border:1px solid #d3e2f0;border-radius:2px;box-shadow:1px 2px 3px rgba(0,0,0,0.18)"></div>
<svg style="left:889.5px;top:415px" width="12" height="12" viewBox="0 0 12 12"><g stroke="#2fb0e6" stroke-width="1.6" fill="none" stroke-linecap="butt"><path d="M4.6 0.3 V3.6 M7.4 0.3 V3.6 M4.6 11.7 V8.4 M7.4 11.7 V8.4"/><path d="M0.6 3.2 L3.4 4.9 M0.6 8.8 L3.4 7.1 M11.4 3.2 L8.6 4.9 M11.4 8.8 L8.6 7.1"/></g><g fill="#2fb0e6"><path d="M3 6 L4.6 4.6 L4.6 7.4Z M9 6 L7.4 4.6 L7.4 7.4Z M6 3.7 L7 5 L5 5Z M6 8.3 L7 7 L5 7Z"/><path d="M0 5.2 L2.4 6 L0 6.8Z M12 5.2 L9.6 6 L12 6.8Z"/></g></svg>
<div class="t ctx" style="left:903px;top:415.5px;letter-spacing:-0.17px">Cloud DW Snowflake</div>
<svg style="left:1013.0px;top:417.5px" width="5" height="7" viewBox="0 0 5 7"><path d="M0.8 0.6 L3.8 3.5 L0.8 6.4" fill="none" stroke="#666" stroke-width="1"/></svg>
<div class="t ctx" style="left:1020px;top:415.5px;letter-spacing:-0.7px">DEMO</div>
<svg style="left:1056.0px;top:417.5px" width="5" height="7" viewBox="0 0 5 7"><path d="M0.8 0.6 L3.8 3.5 L0.8 6.4" fill="none" stroke="#666" stroke-width="1"/></svg>
<div class="t ctx" style="left:1063px;top:415.5px;letter-spacing:-0.57px">DIMENSIONAL_DW</div>
<svg style="left:1164.5px;top:417.5px" width="5" height="7" viewBox="0 0 5 7"><path d="M0.8 0.6 L3.8 3.5 L0.8 6.4" fill="none" stroke="#666" stroke-width="1"/></svg>
<div class="t ctx" style="left:1171px;top:415.5px;letter-spacing:-0.5px">PAYMENT_DATE</div>
<!-- table header -->
<div class="a" id="thead"></div>
<div class="t th" style="left:365px;">User Tags</div>
<svg style="left:423px;top:124px" width="7" height="12" viewBox="0 0 7 12"><path d="M3.5 0 V10" stroke="#3a87c8" stroke-width="1.6"/><path d="M0.5 7 L3.5 11.5 L6.5 7Z" fill="#3a87c8"/></svg>
<div class="vline" style="left:445px;top:116px;height:30px"></div>
<div class="t th" style="left:456px;font-style:italic;font-weight:normal;color:#3c3c3c;letter-spacing:-0.2px;-webkit-text-stroke:0.25px #3c3c3c">Name</div>
<div class="vline" style="left:706px;top:116px;height:30px"></div>
<div class="t th" style="left:717px;">Object Type</div>
<div class="vline" style="left:795px;top:116px;height:30px"></div>
<div class="t th" style="left:806px;">Context</div>
<div class="vline" style="left:1095px;top:116px;height:30px"></div>
<div class="t th" style="left:1106px;letter-spacing:0.2px">Documentation</div>

</body></html>
